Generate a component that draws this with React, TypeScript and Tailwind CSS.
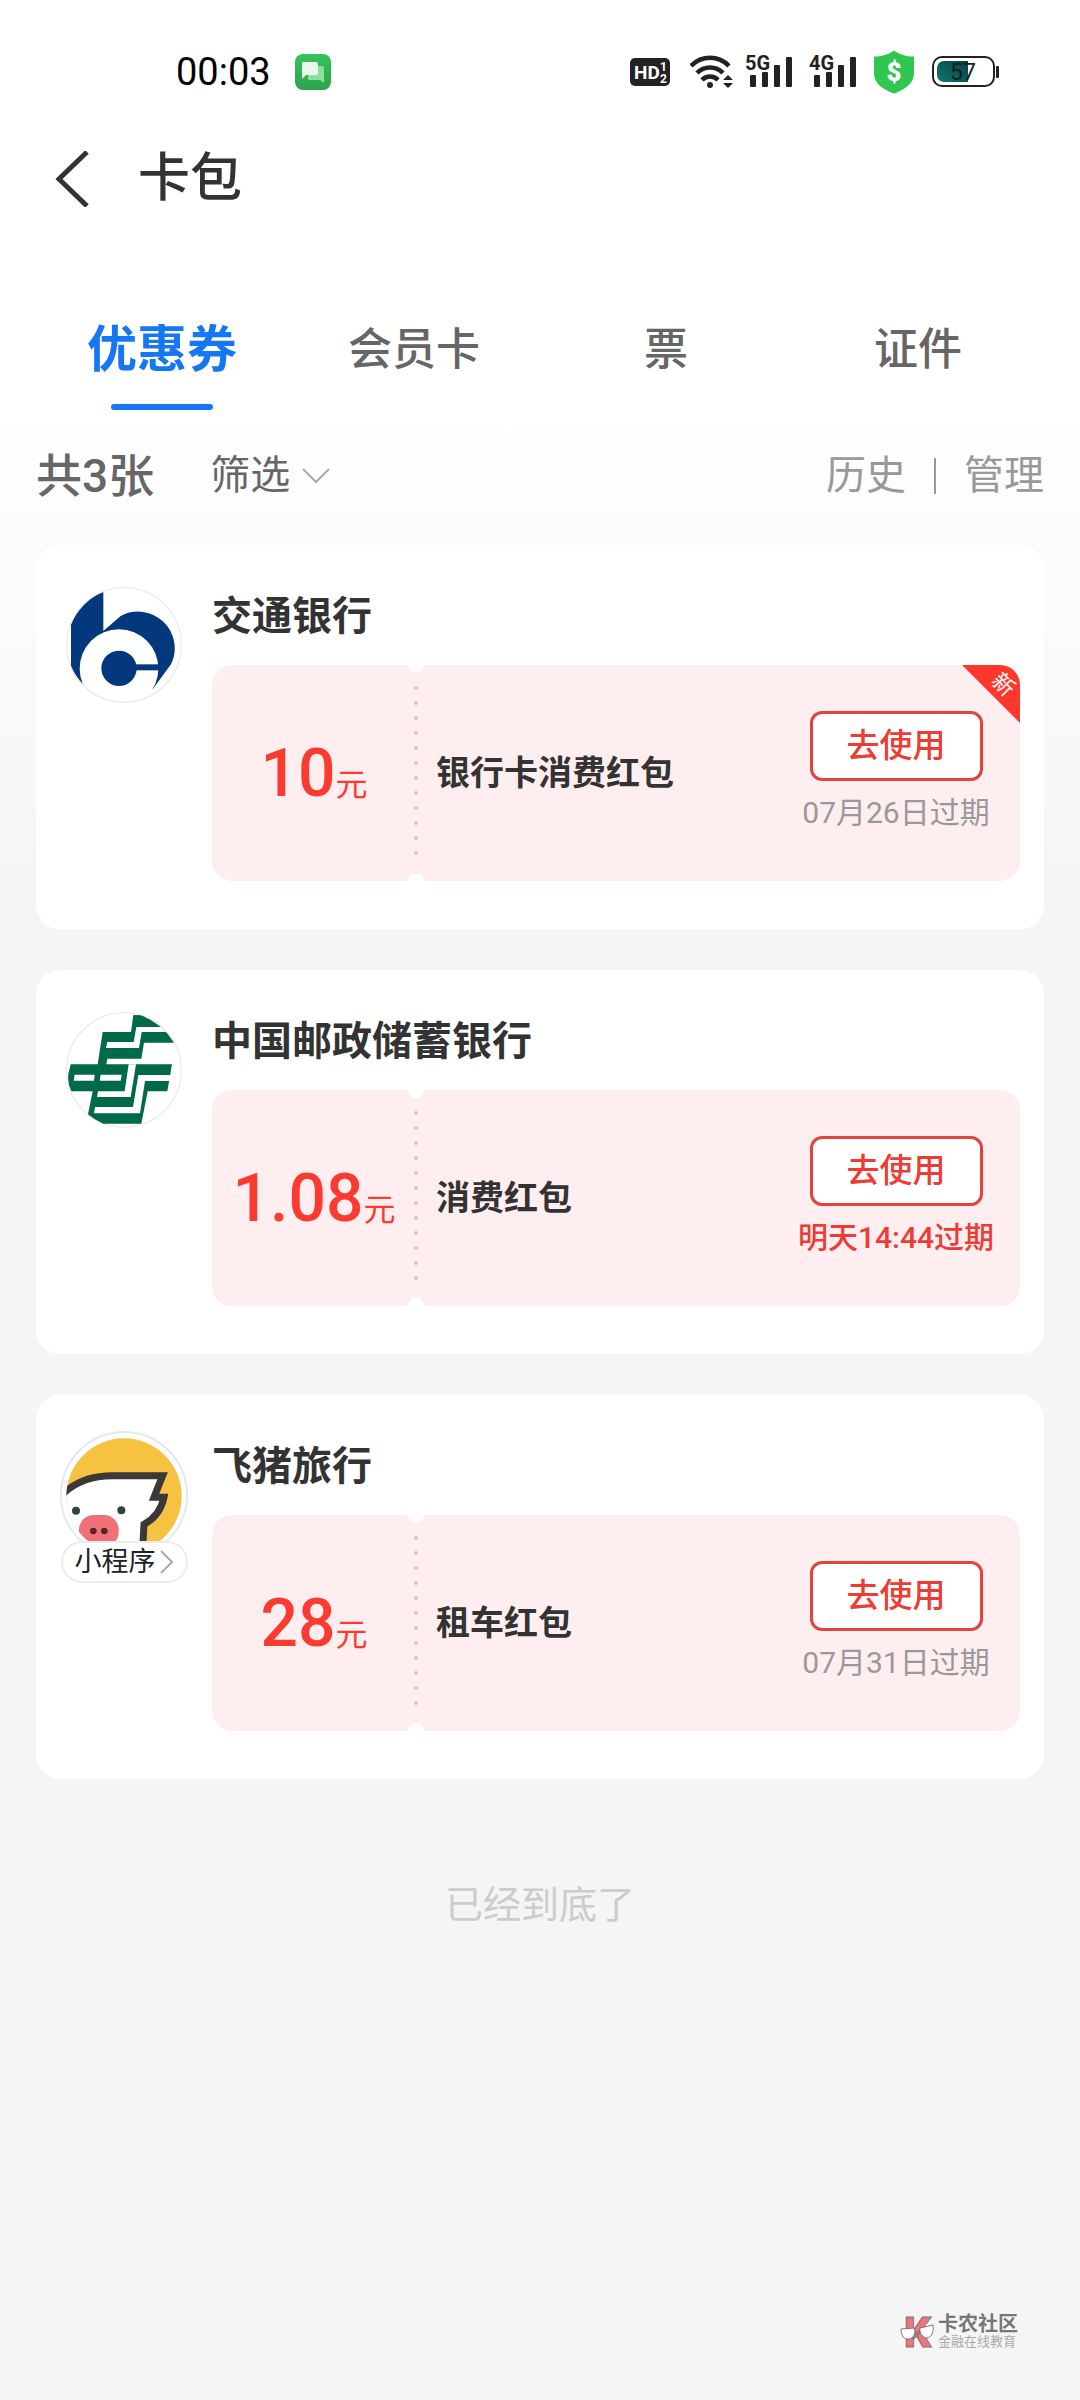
import type { ReactNode } from "react"
import { useState } from "react"

type Coupon = {
  id: string
  shop: string
  logo: ReactNode
  amount: string
  label: string
  expiry: string
  urgent?: boolean
  isNew?: boolean
  miniProgram?: boolean
}

const tabs = ["优惠券", "会员卡", "票", "证件"]

function SignalIcon({ label }: { label: string }) {
  return (
    <svg viewBox="0 0 48 36" className="h-9 w-12 overflow-visible" fill="#222">
      <rect x="4" y="21" width="6" height="12" rx="1" />
      <rect x="16" y="18" width="6" height="15" rx="1" />
      <rect x="28" y="11" width="6" height="22" rx="1" />
      <rect x="40" y="3" width="6" height="30" rx="1" />
      <text x="-1" y="16" fontSize="20" fontWeight="700" stroke="#fff" strokeWidth="3" paintOrder="stroke">
        {label}
      </text>
    </svg>
  )
}

function StatusBar() {
  return (
    <div className="flex h-36 items-center justify-between pr-20 pl-44">
      <div className="flex items-center gap-6">
        <span className="text-[38px] leading-none text-black">00:03</span>
        <svg viewBox="0 0 36 36" className="size-9">
          <defs>
            <linearGradient id="chatBg" x1="0" y1="0" x2="0" y2="1">
              <stop offset="0" stopColor="#35c25c" />
              <stop offset="1" stopColor="#2ba44c" />
            </linearGradient>
          </defs>
          <rect width="36" height="36" rx="8" fill="url(#chatBg)" />
          <path d="M13 12h14a2 2 0 0 1 2 2v15l-4-3H14a2 2 0 0 1-1-2z" fill="#8fdda3" />
          <path d="M8 8h13a2 2 0 0 1 2 2v9a2 2 0 0 1-2 2H11l-4 4V9a1 1 0 0 1 1-1z" fill="#e9f9ec" />
        </svg>
      </div>
      <div className="flex items-center">
        <svg viewBox="0 0 40 28" className="h-7 w-10">
          <rect width="40" height="28" rx="5" fill="#222" />
          <text x="4" y="21" fontSize="19" fontWeight="700" fill="#fff">HD</text>
          <text x="30" y="13" fontSize="12" fontWeight="700" fill="#fff">1</text>
          <text x="30" y="25" fontSize="12" fontWeight="700" fill="#fff">2</text>
        </svg>
        <svg viewBox="0 0 44 34" className="ml-5 h-[34px] w-11" fill="none" stroke="#222" strokeWidth="4.5">
          <path d="M1 11a26 26 0 0 1 38 0" />
          <path d="M7 18a18 18 0 0 1 26 0" />
          <path d="M12 25a11 11 0 0 1 16 0" />
          <circle cx="20" cy="30" r="3" fill="#222" stroke="none" />
          <path d="M33 25l5-5 5 5zM33 28l5 5 5-5z" fill="#222" stroke="none" />
        </svg>
        <div className="ml-3">
          <SignalIcon label="5G" />
        </div>
        <div className="ml-4">
          <SignalIcon label="4G" />
        </div>
        <svg viewBox="0 0 40 43" className="ml-4 h-11 w-10">
          <path d="M20 0c6 4 12 6 20 6v17c0 10-9 16-20 20C9 39 0 33 0 23V6c8 0 14-2 20-6z" fill="#30c650" />
          <text x="20" y="30" fontSize="26" fontWeight="900" fill="#fff" textAnchor="middle">$</text>
        </svg>
        <svg viewBox="0 0 68 32" className="ml-[18px] h-8 w-[68px]">
          <defs>
            <linearGradient id="charge" x1="0" y1="1" x2="1" y2="0">
              <stop offset="0" stopColor="#0b7a72" />
              <stop offset="1" stopColor="#073f40" />
            </linearGradient>
          </defs>
          <rect x="1" y="1" width="61" height="29" rx="9" fill="none" stroke="#222" strokeWidth="2" />
          <path d="M36 5v21H12a7 7 0 0 1-7-7v-7a7 7 0 0 1 7-7z" fill="url(#charge)" />
          <rect x="64" y="10" width="3" height="12" rx="1" fill="#222" />
          <text x="18" y="24" fontSize="23" fill="#111c1e">57</text>
        </svg>
      </div>
    </div>
  )
}

function BocomLogo() {
  return (
    <svg viewBox="108 143 348 348" className="size-[116px]">
      <path
        d="M220 157C175 175 143 207 123 255V385C133 408 146 425 163 440L368 450L423 375A110 110 0 0 0 272 230L220 275Z"
        fill="#04387c"
      />
      <circle cx="267" cy="388" r="118" fill="#fff" />
      <circle cx="267" cy="387" r="53" fill="#04387c" />
      <path d="M300 375H392V393H300Z" fill="#04387c" />
      <circle cx="282" cy="317" r="172" fill="none" stroke="#ececec" strokeWidth="4" />
    </svg>
  )
}

function PsbcLogo() {
  return (
    <svg viewBox="108 158 348 348" className="size-[116px]">
      <circle cx="282" cy="332" r="172" fill="#fff" stroke="#ececec" strokeWidth="4" />
      <path
        d="M310 167L332 168Q395 190 432 250H342L334 298H232L229 315H426L412 396H353L334 493H220Q193 482 174 465L188 396H124Q112 370 115 345L122 315H203L218 218H303Z"
        fill="#006a48"
      />
      <g fill="#fff">
        <path d="M232 248H311L319 203H393L408 218H335L327 266H228Z" />
        <path d="M134 346H194L192 364H131Z" />
        <path d="M212 346H275L272 364H209Z" />
        <path d="M296 315H318L302 413H201L204 396H284Z" />
        <path d="M325 347H422L419 365H345L330 462H192L195 443H309Z" />
      </g>
    </svg>
  )
}

function FliggyLogo() {
  return (
    <svg viewBox="90 153 384 384" className="size-32">
      <defs>
        <clipPath id="face">
          <circle cx="282" cy="348" r="173" />
        </clipPath>
      </defs>
      <circle cx="282" cy="345" r="189" fill="#fff" stroke="#e6e8f0" strokeWidth="6" />
      <g clipPath="url(#face)">
        <rect x="90" y="153" width="384" height="384" fill="#f5c242" />
        <path
          d="M90 350Q150 286 250 287H398L372 352H402Q390 408 342 433L335 560H90Z"
          fill="#fff"
          stroke="#3b3835"
          strokeWidth="21"
        />
        <circle cx="138" cy="392" r="12" fill="#30443c" />
        <circle cx="274" cy="391" r="12" fill="#30443c" />
        <rect x="147" y="405" width="119" height="96" rx="44" fill="#f07078" />
        <circle cx="190" cy="453" r="10" fill="#5c2226" />
        <circle cx="223" cy="453" r="10" fill="#5c2226" />
      </g>
    </svg>
  )
}

const coupons: Coupon[] = [
  {
    id: "bocom",
    shop: "交通银行",
    logo: <BocomLogo />,
    amount: "10",
    label: "银行卡消费红包",
    expiry: "07月26日过期",
    isNew: true,
  },
  {
    id: "psbc",
    shop: "中国邮政储蓄银行",
    logo: <PsbcLogo />,
    amount: "1.08",
    label: "消费红包",
    expiry: "明天14:44过期",
    urgent: true,
  },
  {
    id: "fliggy",
    shop: "飞猪旅行",
    logo: <FliggyLogo />,
    amount: "28",
    label: "租车红包",
    expiry: "07月31日过期",
    miniProgram: true,
  },
]

function CouponCard({ coupon }: { coupon: Coupon }) {
  return (
    <article className="flex rounded-3xl bg-white pt-9 pr-6 pb-12">
      <div className="flex w-44 shrink-0 flex-col items-center">
        <div className="flex size-32 items-center justify-center">{coupon.logo}</div>
        {coupon.miniProgram && (
          <button
            type="button"
            className="relative -mt-[18px] flex h-[42px] items-center gap-1 rounded-full border-2 border-[#ececee] bg-white px-3 text-[27px] leading-none text-[#222]"
          >
            小程序
            <svg viewBox="0 0 14 24" className="h-6 w-3.5" fill="none" stroke="#aaa" strokeWidth="2">
              <path d="M1 1l11 11L1 23" />
            </svg>
          </button>
        )}
      </div>

      <div className="min-w-0 flex-1 pt-2">
        <h2 className="text-[40px] leading-14 font-bold text-[#333]">{coupon.shop}</h2>

        <div className="relative mt-5 flex min-h-[216px] items-stretch overflow-hidden rounded-[20px] bg-[#feeef0]">
          <div className="flex w-[204px] shrink-0 items-center justify-center text-[#fb3a30]">
            <p className="whitespace-nowrap">
              <span className="text-[66px] font-medium">{coupon.amount}</span>
              <span className="text-[32px]">元</span>
            </p>
          </div>

          {/* tear line with the two notches */}
          <div className="relative w-0">
            <span className="absolute -top-2 -left-2 size-4 rounded-full bg-white" />
            <svg className="absolute inset-y-5 -left-0.5 h-[180px] w-1">
              <line x1="2" y1="3" x2="2" y2="180" stroke="#ecbcc0" strokeWidth="4" strokeLinecap="round" strokeDasharray="0 15" />
            </svg>
            <span className="absolute -bottom-2 -left-2 size-4 rounded-full bg-white" />
          </div>

          <div className="flex flex-1 items-center justify-between pr-[30px] pl-5">
            <h3 className="text-[34px] font-bold text-[#333]">{coupon.label}</h3>
            <div className="flex w-[188px] flex-col items-center gap-2.5 whitespace-nowrap">
              <button
                type="button"
                className="rounded-xl border-3 border-[#e0443c] bg-white px-[34px] py-2 text-[33px] leading-12 font-medium text-[#ee3b33]"
              >
                去使用
              </button>
              <p
                className={`text-[30px] leading-11 ${coupon.urgent ? "font-medium text-[#ee3b33]" : "text-[#999]"}`}
              >
                {coupon.expiry}
              </p>
            </div>
          </div>

          {coupon.isNew && (
            <div className="absolute top-0 right-0 size-[58px] bg-[#ff382d] [clip-path:polygon(0_0,100%_0,100%_100%)]">
              <span className="absolute top-2 right-1.5 rotate-45 text-[22px] leading-6 text-white">新</span>
            </div>
          )}
        </div>
      </div>
    </article>
  )
}

export default function App() {
  const [activeTab, setActiveTab] = useState("优惠券")

  return (
    <div className="flex min-h-screen flex-col bg-[#f5f5f5] bg-[linear-gradient(#fff_400px,#f5f5f5_900px)] font-['Roboto','Noto_Sans_CJK_SC',sans-serif]">
      <StatusBar />

      <header className="flex h-[70px] items-center gap-12 pl-[54px]">
        <button type="button" aria-label="返回">
          <svg viewBox="0 0 36 56" className="h-14 w-9" fill="none" stroke="#333" strokeWidth="5">
            <path d="M33 1L5 28l28 27" />
          </svg>
        </button>
        <h1 className="text-[52px] leading-none font-medium text-[#333]">卡包</h1>
      </header>

      <div role="tablist" className="mt-[106px] grid grid-cols-4 px-9">
        {tabs.map((tab) => {
          const active = tab === activeTab
          return (
            <button
              key={tab}
              type="button"
              role="tab"
              aria-selected={active}
              onClick={() => setActiveTab(tab)}
              className="flex flex-col items-center gap-6"
            >
              <span
                className={`leading-[60px] ${active ? "text-[50px] font-bold text-[#1677f5]" : "text-[44px] font-medium text-[#666]"}`}
              >
                {tab}
              </span>
              <span className={`h-1.5 w-[102px] rounded-full ${active ? "bg-[#1677f5]" : ""}`} />
            </button>
          )
        })}
      </div>

      <div className="mt-9 flex items-center justify-between px-9 leading-[60px]">
        <div className="flex items-center">
          <span className="text-[46px] font-medium text-[#666]">共3张</span>
          <button type="button" className="ml-14 flex items-center gap-3 text-[40px] text-[#666]">
            筛选
            <svg viewBox="0 0 28 16" className="h-4 w-7" fill="none" stroke="#aaa" strokeWidth="2">
              <path d="M1 1l13 13L27 1" />
            </svg>
          </button>
        </div>
        <div className="flex items-center gap-7 text-[40px] text-[#999]">
          <button type="button">历史</button>
          <span className="h-9 w-0.5 bg-[#999]" />
          <button type="button">管理</button>
        </div>
      </div>

      <main className="mt-[39px] flex flex-col gap-[41px] px-9">
        {coupons.map((coupon) => (
          <CouponCard key={coupon.id} coupon={coupon} />
        ))}
      </main>

      <p className="mt-24 text-center text-[38px] leading-[60px] text-[#ccc]">已经到底了</p>

      <footer className="mt-auto flex items-center justify-end gap-1 pr-[62px] pb-[50px]">
        <svg viewBox="0 0 34 36" className="h-9 w-[34px] overflow-visible" stroke="#777">
          <text x="4" y="33" fontSize="42" fontWeight="900" fill="#f2737c">K</text>
          <path d="M1 15l13-1c3 6-2 12-7 11-4 0-6-5-6-10zM20 14l13-3c1 6-1 12-6 13-4 0-8-5-7-10z" fill="#fff" />
        </svg>
        <div className="flex flex-col">
          <span className="text-[20px] leading-5 font-bold text-[#777]">卡农社区</span>
          <span className="text-[13px] leading-4 text-[#aaa]">金融在线教育</span>
        </div>
      </footer>
    </div>
  )
}
